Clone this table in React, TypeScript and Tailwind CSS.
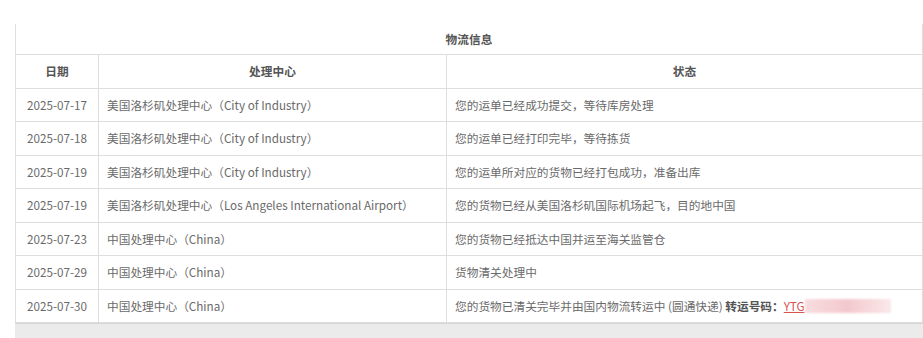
import React from "react";

const rows = [
  { date: "2025-07-17", center: "美国洛杉矶处理中心（City of Industry）", status: "您的运单已经成功提交，等待库房处理" },
  { date: "2025-07-18", center: "美国洛杉矶处理中心（City of Industry）", status: "您的运单已经打印完毕，等待拣货" },
  { date: "2025-07-19", center: "美国洛杉矶处理中心（City of Industry）", status: "您的运单所对应的货物已经打包成功，准备出库" },
  { date: "2025-07-19", center: "美国洛杉矶处理中心（Los Angeles International Airport）", status: "您的货物已经从美国洛杉矶国际机场起飞，目的地中国" },
  { date: "2025-07-23", center: "中国处理中心（China）", status: "您的货物已经抵达中国并运至海关监管仓" },
  { date: "2025-07-29", center: "中国处理中心（China）", status: "货物清关处理中" },
];

export default function App() {
  return (
    <div
      className="w-[923px] h-[338px] overflow-hidden bg-white pt-[24px] pl-[15px] text-[11.7px] text-[#6a6a6a]"
      style={{ fontFamily: '"Noto Sans CJK SC", "Noto Sans", sans-serif' }}
    >
      <table className="w-[908px] border-collapse table-fixed">
        <colgroup>
          <col className="w-[83px]" />
          <col className="w-[348px]" />
          <col />
        </colgroup>
        <thead>
          <tr className="h-[30px]">
            <th colSpan={3} className="border-x border-b border-[#dedede] font-bold text-[#555] text-center">
              物流信息
            </th>
          </tr>
          <tr className="h-[34px]">
            <th className="border border-[#dedede] font-bold text-[#555] text-center">日期</th>
            <th className="border border-[#dedede] font-bold text-[#555] text-center">处理中心</th>
            <th className="border border-[#dedede] font-bold text-[#555] text-center">状态</th>
          </tr>
        </thead>
        <tbody>
          {rows.map((r, i) => (
            <tr key={i} className="h-[33.5px]">
              <td className="border border-[#dedede] text-center">{r.date}</td>
              <td className="border border-[#dedede] px-[8px]">{r.center}</td>
              <td className="border border-[#dedede] px-[8px]">{r.status}</td>
            </tr>
          ))}
          <tr className="h-[33.5px]">
            <td className="border border-[#dedede] text-center">2025-07-30</td>
            <td className="border border-[#dedede] px-[8px]">中国处理中心（China）</td>
            <td className="border border-[#dedede] px-[8px] whitespace-nowrap">
              <span className="inline-flex items-center">
                您的货物已清关完毕并由国内物流转运中 (圆通快递)&nbsp;
                <b className="text-[#555]">转运号码：</b>
                <span className="text-[#d9534f] underline">YTG</span>
                <span className="inline-block w-[86px] h-[14px] bg-gradient-to-r from-[#f9dcdf] via-[#f2c9cd] to-[#fbe8ea] blur-[1px]" />
              </span>
            </td>
          </tr>
        </tbody>
      </table>
      <div className="w-[908px] h-[20px] bg-[#ebebeb] border-t border-[#d4d4d4]" />
    </div>
  );
}
